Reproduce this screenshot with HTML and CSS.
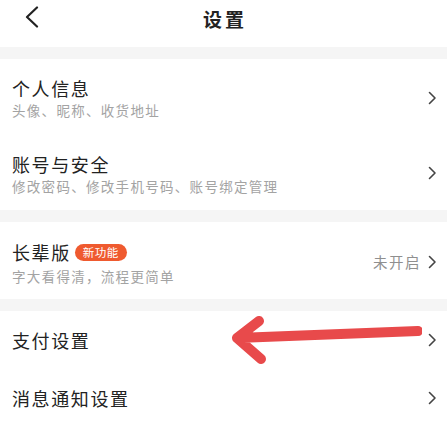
FILE: index.html
```html
<!DOCTYPE html>
<html lang="zh-CN">
<head>
<meta charset="utf-8">
<link rel="stylesheet" href="styles.css">
</head>
<body>
<div class="page">
  <header class="header">
    <svg class="back" width="16" height="22" viewBox="0 0 16 22"><path d="M13 1.5 L3 11 L13 20.5" fill="none" stroke="#222" stroke-width="2.2" stroke-linecap="round" stroke-linejoin="round"/></svg>
    <h1 class="title">设置</h1>
  </header>
  <div class="band"></div>
  <section class="group">
    <div class="row row-two">
      <div class="text">
        <div class="name">个人信息</div>
        <div class="sub">头像、昵称、收货地址</div>
      </div>
      <div class="right"><svg class="chev" width="9" height="14" viewBox="0 0 9 14"><path d="M1.5 1.5 L7 7 L1.5 12.5" fill="none" stroke="#444" stroke-width="1.6" stroke-linecap="round" stroke-linejoin="round"/></svg></div>
    </div>
    <div class="row row-two">
      <div class="text">
        <div class="name">账号与安全</div>
        <div class="sub">修改密码、修改手机号码、账号绑定管理</div>
      </div>
      <div class="right"><svg class="chev" width="9" height="14" viewBox="0 0 9 14"><path d="M1.5 1.5 L7 7 L1.5 12.5" fill="none" stroke="#444" stroke-width="1.6" stroke-linecap="round" stroke-linejoin="round"/></svg></div>
    </div>
  </section>
  <div class="band"></div>
  <section class="group">
    <div class="row row-elder">
      <div class="text">
        <div class="name name-badge">长辈版<span class="badge">新功能</span></div>
        <div class="sub">字大看得清，流程更简单</div>
      </div>
      <div class="right"><span class="status">未开启</span><svg class="chev" width="9" height="14" viewBox="0 0 9 14"><path d="M1.5 1.5 L7 7 L1.5 12.5" fill="none" stroke="#444" stroke-width="1.6" stroke-linecap="round" stroke-linejoin="round"/></svg></div>
    </div>
  </section>
  <div class="band band-small"></div>
  <section class="group arrow-wrap">
    <div class="row row-one">
      <div class="text"><div class="name">支付设置</div></div>
      <div class="right"><svg class="chev" width="9" height="14" viewBox="0 0 9 14"><path d="M1.5 1.5 L7 7 L1.5 12.5" fill="none" stroke="#444" stroke-width="1.6" stroke-linecap="round" stroke-linejoin="round"/></svg></div>
    </div>
    <div class="row row-one">
      <div class="text"><div class="name">消息通知设置</div></div>
      <div class="right"><svg class="chev" width="9" height="14" viewBox="0 0 9 14"><path d="M1.5 1.5 L7 7 L1.5 12.5" fill="none" stroke="#444" stroke-width="1.6" stroke-linecap="round" stroke-linejoin="round"/></svg></div>
    </div>
    <svg class="arrow" width="200" height="50" viewBox="0 0 200 50"><path d="M196 15 L15 22 M37 5 L15 22 L39 43" fill="none" stroke="#e84a4b" stroke-width="10" stroke-linecap="round" stroke-linejoin="round"/></svg>
  </section>
</div>
</body>
</html>
```
FILE: styles.css
```css
* { box-sizing: border-box; margin: 0; padding: 0; }
html, body { background: #fff; }
body {
  font-family: "Noto Sans CJK SC", "Noto Sans", sans-serif;
  color: #222;
  width: 447px;
  height: 422px;
  overflow: hidden;
}
.page { width: 447px; }
.header {
  height: 47px;
  position: relative;
  display: flex;
  justify-content: center;
  align-items: flex-start;
  padding-top: 5px;
}
.back { position: absolute; left: 24px; top: 6px; }
.title {
  font-size: 19px;
  font-weight: 700;
  letter-spacing: 3px;
  line-height: 28px;
  margin-left: 3px;
}
.band { height: 12px; background: #f5f5f5; }
.band-small { height: 12px; }
.group { background: #fff; }
.row {
  display: flex;
  align-items: center;
  justify-content: space-between;
  padding: 0 10px 0 12px;
}
.row-two { height: 75.5px; padding-top: 2px; }
.row-elder { height: 77px; padding-top: 2px; }
.row-one { height: 58px; }
.text { display: flex; flex-direction: column; gap: 1px; }
.name {
  font-size: 18px;
  letter-spacing: 1.6px;
  line-height: 24px;
  color: #222;
}
.name-badge { display: flex; align-items: center; line-height: 28px; }
.sub {
  font-size: 13.5px;
  letter-spacing: 1.3px;
  line-height: 18px;
  color: #a3a3a3;
}
.badge {
  display: inline-flex;
  align-items: center;
  justify-content: center;
  margin-left: 4px;
  width: 52px;
  height: 17px;
  border-radius: 9px;
  background: #ef5a2f;
  color: #fff;
  font-size: 11.5px;
  letter-spacing: 0.5px;
  line-height: 17px;
}
.right { display: flex; align-items: center; gap: 7px; }
.status {
  font-size: 14.5px;
  letter-spacing: 1.5px;
  color: #8f8f8f;
  line-height: 20px;
}
.chev { display: block; }
.arrow-wrap { position: relative; }
.arrow { position: absolute; left: 222px; top: 5px; }
```
